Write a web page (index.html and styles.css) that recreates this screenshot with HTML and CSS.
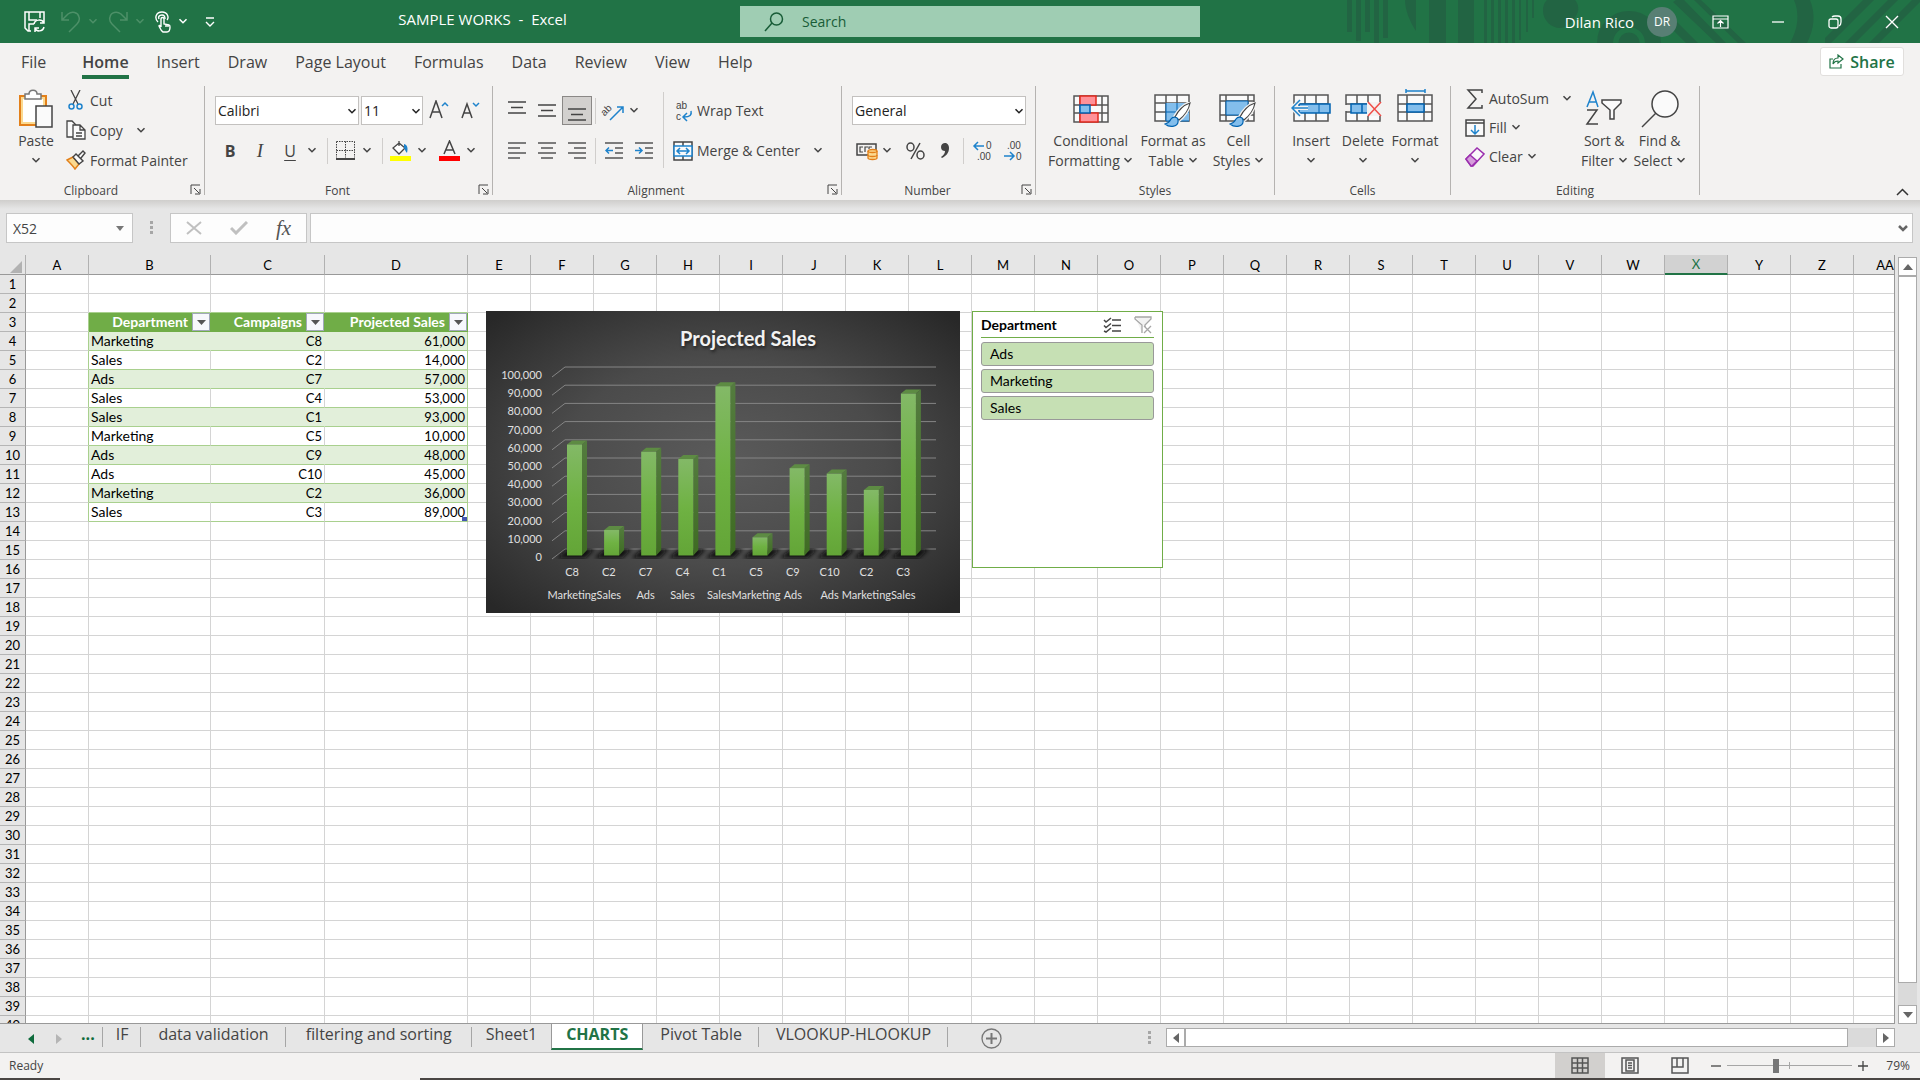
FILE: index.html
```html
<!DOCTYPE html>
<html lang="en">
  <head>
    <meta charset="utf-8">
    <title>SAMPLE WORKS - Excel</title>
    <link rel="stylesheet" href="styles.css">
  </head>
  <body>
    <svg class="sprites" aria-hidden="true">
      <symbol id="chev" viewBox="0 0 8 6"><path d="M1 1l3 3 3-3" fill="none" stroke="currentColor" stroke-width="1.3"/></symbol>
      <symbol id="launch" viewBox="0 0 11 11"><path d="M1 10V1h9M4 4l5 5M10 5v5H5" fill="none" stroke="#444"/></symbol>
      <symbol id="dots" viewBox="0 0 4 14"><path d="M0 0h3v3H0zM0 5h3v3H0zM0 10h3v3H0z" fill="#a6a6a6"/></symbol>
      <symbol id="brush" viewBox="0 0 28 26">
        <path d="M26 1C20 3 14 9 11 15l4 3c5-4 10-11 11-17z" fill="#fff" stroke="#f3f2f1" stroke-width="4"/>
        <path d="M26 1C20 3 14 9 11 15l4 3c5-4 10-11 11-17z" fill="#fff" stroke="#444" stroke-width="1.2"/>
        <path d="M14 18c0-3-5-4-7-1-1 2-2 4-6 5 5 4 14 3 13-4z" fill="#83beec" stroke="#0063b1" stroke-width="1.2"/>
      </symbol>
    </svg>

    <header class="titlebar">
      <svg class="pattern" viewBox="0 0 580 43" aria-hidden="true">
        <g fill="#226443">
          <path d="M7 0h5v32H7zM16 0h5v41h-5zM25 0h5v32h-5zM34 0h5v43h-5zM43 0h5v38h-5z"/>
          <path d="M65 0h11v31C70 22 65 10 65 0zM89 0h17v43H89zM118 0h16v43h-16z"/>
          <path d="M144 0h3v43h-3zM151 0h3v43h-3zM158 0h3v43h-3zM165 0h3v43h-3zM172 0h3v43h-3zM179 0h2v40h-2zM186 0h2v32h-2zM192 0h2v18h-2z"/>
          <path d="M203 11C203 5 205 2 207 0h28c4 5 4 10 2 14-3 7-10 14-17 14-9 0-17-8-17-17z"/>
          <path d="M333 18l25 25h-12l-13-13zM336 0h8l42 43h-10L333 2zM354 0h7l45 43h-8z"/>
          <path d="M454 0h16c6 15 4 29-3 43h-17c8-14 10-29 4-43zM485 38l38-38h11l-43 43h-6zM505 43l43-43h10l-43 43zM529 43l43-43h8v2l-41 41z"/>
        </g>
        <g fill="none" stroke="#226443"><circle cx="289" cy="43" r="24" stroke-width="16"/><circle cx="289" cy="43" r="5" stroke-width="11"/></g>
      </svg>
      <div class="quick">
        <button class="qbtn save" aria-label="Save"><svg width="22" height="22" viewBox="0 0 22 22" fill="none" stroke="#fff" stroke-width="1.5"><path d="M7 20H4l-3-3V1h19v7M5 1v8h8M16 1v6M5 20v-7h5"/><path d="M10 13c1-5 8-5 10-1M20 8v4h-4M20 16c-1 5-8 5-9 1M11 21v-4h4"/></svg></button>
        <button class="qbtn dim" aria-label="Undo"><svg width="20" height="22" viewBox="0 0 20 22" fill="none" stroke="currentColor" stroke-width="1.5"><path d="M1 1v8h7M1 9l6-6c4-3 10-2 11 3 1 3 0 5-2 7l-8 8"/></svg><svg class="chev"><use href="#chev"/></svg></button>
        <button class="qbtn dim" aria-label="Redo"><svg width="20" height="22" viewBox="0 0 20 22" fill="none" stroke="currentColor" stroke-width="1.5"><path d="M19 1v8h-7M19 9l-6-6C9 0 3 1 2 6c-1 3 0 5 2 7l8 8"/></svg><svg class="chev"><use href="#chev"/></svg></button>
        <button class="qbtn" aria-label="Touch mode"><svg width="16" height="22" viewBox="0 0 16 22" fill="none" stroke="#fff" stroke-width="1.4"><path d="M3 11C-1 7 1 1 7 1s7 6 5 8M4 8c-1-2 0-4 3-4s3 2 3 4"/><path d="M6 16V8c0-2 3-2 3 0v5l5 1c1 0 1 1 1 2 0 3-1 5-3 5H8c-2-1-3-4-4-6 0-1 1-1 2 1zM11 13v3M13 14v2"/></svg><svg class="chev"><use href="#chev"/></svg></button>
        <button class="qbtn customize" aria-label="Customize"><svg width="10" height="10" viewBox="0 0 10 10" fill="none" stroke="#fff" stroke-width="1.4"><path d="M1 1h8M1 5l4 4 4-4"/></svg></button>
        <h1 class="doc-title">SAMPLE WORKS&nbsp; -&nbsp; Excel</h1>
      </div>
      <label class="search">
        <svg width="20" height="20" viewBox="0 0 20 20" fill="none" stroke="#185c37" stroke-width="1.5"><circle cx="12.500" cy="7" r="6"/><path d="M8 11l-7 8"/></svg>
        <input type="search" placeholder="Search" aria-label="Search">
      </label>
      <div class="account">
        <span class="user">Dilan Rico</span>
        <span class="avatar">DR</span>
        <button class="win" aria-label="Ribbon display options"><svg width="17" height="14" viewBox="0 0 17 14" fill="none" stroke="#fff" stroke-width="1.2"><path d="M1 1h15v12H1zM1 4h15M8.500 12V6M5.500 8.500l3-3 3 3"/></svg></button>
        <button class="win" aria-label="Minimize"><svg width="14" height="14" viewBox="0 0 14 14" stroke="#fff" stroke-width="1.3"><path d="M1 7h12"/></svg></button>
        <button class="win" aria-label="Restore"><svg width="14" height="14" viewBox="0 0 14 14" fill="none" stroke="#fff" stroke-width="1.3"><rect x="1" y="4" width="9" height="9" rx="2"/><path d="M4 2c1-1 2-1 3-1h3c2 0 3 1 3 3v3c0 2 0 3-2 4"/></svg></button>
        <button class="win" aria-label="Close"><svg width="14" height="14" viewBox="0 0 14 14" stroke="#fff" stroke-width="1.4"><path d="M1 1l12 12M13 1L1 13"/></svg></button>
      </div>
    </header>

    <nav class="tabs">
      <a class="file" href="#file">File</a>
      <a class="active" href="#home">Home</a>
      <a href="#insert">Insert</a>
      <a href="#draw">Draw</a>
      <a href="#layout">Page Layout</a>
      <a href="#formulas">Formulas</a>
      <a href="#data">Data</a>
      <a href="#review">Review</a>
      <a href="#view">View</a>
      <a href="#help">Help</a>
      <button class="share"><svg width="15" height="15" viewBox="0 0 15 15" fill="none" stroke="#217346" stroke-width="1.2"><path d="M4 5H1v9h11v-4"/><path d="M4 10c0-4 2-6 5-6V1l5 4-5 4V7C7 7 5 8 4 10z"/></svg>Share</button>
    </nav>

    <section class="ribbon">
      <div class="group clipboard">
        <div class="body">
          <button class="big paste">
            <span class="art"><svg width="36" height="40" viewBox="0 0 36 40"><path d="M2 7h26v29H2z" fill="#fff" stroke="#e3801a" stroke-width="2"/><path d="M4 9h22v25H4z" fill="none" stroke="#fbd98f" stroke-width="2"/><path d="M7 10V5h4c0-5 8-5 8 0h4v5z" fill="#fff" stroke="#777" stroke-width="1.5"/><path d="M18 17h16v21H18z" fill="#fafafa" stroke="#444" stroke-width="1.5"/></svg></span>
            Paste<svg class="chev"><use href="#chev"/></svg>
          </button>
          <div class="stack">
            <button class="small"><span class="ico"><svg width="16" height="20" viewBox="0 0 16 20" fill="none"><path d="M3 0l7 14M12 0L5 14" stroke="#444" stroke-width="1.3"/><circle cx="3.500" cy="16.500" r="2.500" stroke="#1e83cc" stroke-width="1.500"/><circle cx="11.500" cy="16.500" r="2.500" stroke="#1e83cc" stroke-width="1.500"/></svg></span>Cut</button>
            <button class="small"><span class="ico"><svg width="20" height="20" viewBox="0 0 20 20" fill="#fafafa" stroke="#444" stroke-width="1.3"><path d="M7 17H1V1h5l4 4"/><path d="M7 5h7l5 5v9H7zM14 5v5h5M10 13h6M10 16h6"/></svg></span>Copy<svg class="chev far"><use href="#chev"/></svg></button>
            <button class="small"><span class="ico"><svg width="20" height="20" viewBox="0 0 20 20"><path d="M1 10l6-3 6 7-4 5C7 16 4 13 1 10z" fill="#fbd98f" stroke="#e3801a" stroke-width="1.5"/><path d="M7 7l3-3 7 7-4 3zM12 6l5-5 2 2-4 5" fill="#fafafa" stroke="#444" stroke-width="1.4"/></svg></span>Format Painter</button>
          </div>
        </div>
        <footer class="with-launcher">Clipboard<button aria-label="Clipboard options"><svg width="11" height="11"><use href="#launch"/></svg></button></footer>
      </div>

      <div class="group font">
        <div class="body rows">
          <div class="row">
            <span class="combo name"><select aria-label="Font"><option>Calibri</option></select><svg class="chev"><use href="#chev"/></svg></span>
            <span class="combo size"><select aria-label="Font size"><option>11</option></select><svg class="chev"><use href="#chev"/></svg></span>
            <button class="tool grow" aria-label="Increase font size"><svg width="22" height="22" viewBox="0 0 22 22" fill="none"><path d="M2 18L8 1l6 17M4 12h8" stroke="#444" stroke-width="1.500"/><path d="M14 6l3-3 3 3" stroke="#1e83cc" stroke-width="1.500"/></svg></button>
            <button class="tool grow" aria-label="Decrease font size"><svg width="22" height="22" viewBox="0 0 22 22" fill="none"><path d="M2 18L7 4l5 14M4 13h6" stroke="#444" stroke-width="1.500"/><path d="M13 3l3 3 3-3" stroke="#1e83cc" stroke-width="1.500"/></svg></button>
          </div>
          <div class="row">
            <button class="tool bold" aria-label="Bold">B</button>
            <button class="tool italic" aria-label="Italic">I</button>
            <button class="tool underline" aria-label="Underline">U</button>
            <svg class="chev"><use href="#chev"/></svg>
            <i class="sep"></i>
            <button class="tool" aria-label="Borders"><svg width="19" height="19" viewBox="0 0 19 19" fill="none" stroke="#444"><path d="M.5 .5h18M.5 9.500h18M.5 .5v16M9.500 .5v16M18.500 .5v16" stroke-dasharray="1.500 1"/><path d="M0 18h19" stroke-width="2"/></svg></button>
            <svg class="chev"><use href="#chev"/></svg>
            <i class="sep"></i>
            <button class="tool" aria-label="Fill color"><svg width="21" height="21" viewBox="0 0 21 21"><path d="M9 1v5M9 3l6 5-6 6-6-6z" fill="#fff" stroke="#444" stroke-width="1.300"/><path d="M14 4c4 1 4 5 3 9-2-2-2-4-3-5z" fill="#1e83cc"/><path d="M0 16h21v5H0z" fill="#ff0"/></svg></button>
            <svg class="chev"><use href="#chev"/></svg>
            <button class="tool" aria-label="Font color"><svg width="21" height="21" viewBox="0 0 21 21"><path d="M5 14l5.500-13L16 14M7 10h7" fill="none" stroke="#444" stroke-width="1.500"/><path d="M0 16h21v5H0z" fill="#f00"/></svg></button>
            <svg class="chev"><use href="#chev"/></svg>
          </div>
        </div>
        <footer class="with-launcher">Font<button aria-label="Font options"><svg width="11" height="11"><use href="#launch"/></svg></button></footer>
      </div>

      <div class="group alignment">
        <div class="body">
          <div class="rows">
            <div class="row">
              <button class="tool" aria-label="Top align"><svg width="18" height="20" viewBox="0 0 18 20" stroke="#444" stroke-width="1.500"><path d="M0 1h18M3 6.500h12M0 12h18"/></svg></button>
              <button class="tool" aria-label="Middle align"><svg width="18" height="20" viewBox="0 0 18 20" stroke="#444" stroke-width="1.500"><path d="M0 4h18M3 9.500h12M0 15h18"/></svg></button>
              <button class="tool pressed" aria-label="Bottom align"><svg width="18" height="20" viewBox="0 0 18 20" stroke="#444" stroke-width="1.500"><path d="M0 8h18M3 13.500h12M0 19h18"/></svg></button>
              <i class="sep"></i>
              <button class="tool" aria-label="Orientation"><svg class="loose" width="22" height="22" viewBox="0 0 22 22"><text x="0" y="13" transform="rotate(-45 5 13)" class="glyph">ab</text><path d="M7 20L20 7M14 7h6v6" fill="none" stroke="#1e83cc" stroke-width="1.500"/></svg></button>
              <svg class="chev"><use href="#chev"/></svg>
            </div>
            <div class="row">
              <button class="tool" aria-label="Align left"><svg width="18" height="18" viewBox="0 0 18 18" stroke="#555" stroke-width="1.500"><path d="M0 1h18M0 6h12M0 11h18M0 16h12"/></svg></button>
              <button class="tool" aria-label="Center"><svg width="18" height="18" viewBox="0 0 18 18" stroke="#555" stroke-width="1.500"><path d="M0 1h18M3 6h12M0 11h18M3 16h12"/></svg></button>
              <button class="tool" aria-label="Align right"><svg width="18" height="18" viewBox="0 0 18 18" stroke="#555" stroke-width="1.500"><path d="M0 1h18M6 6h12M0 11h18M6 16h12"/></svg></button>
              <i class="sep"></i>
              <button class="tool" aria-label="Decrease indent"><svg width="18" height="18" viewBox="0 0 18 18" fill="none" stroke="#555" stroke-width="1.500"><path d="M0 1h18M10 6h8M10 11h8M0 16h18"/><path d="M8 8.500H1M4 5.500l-3 3 3 3" stroke="#1e83cc"/></svg></button>
              <button class="tool" aria-label="Increase indent"><svg width="18" height="18" viewBox="0 0 18 18" fill="none" stroke="#555" stroke-width="1.500"><path d="M0 1h18M10 6h8M10 11h8M0 16h18"/><path d="M0 8.500h7M4 5.500l3 3-3 3" stroke="#1e83cc"/></svg></button>
            </div>
          </div>
          <div class="rows wrap">
            <div class="row"><button class="small"><span class="ico"><svg class="loose" width="18" height="22" viewBox="0 0 18 22"><text x="2" y="9" class="glyph">ab</text><text x="2" y="20" class="glyph">c</text><path d="M17 11c1 4-1 6-7 6M13 13l-4 4 4 4" fill="none" stroke="#1e83cc" stroke-width="1.500"/></svg></span>Wrap Text</button></div>
            <div class="row"><button class="small"><span class="ico"><svg width="20" height="20" viewBox="0 0 20 20" fill="#fafafa" stroke="#444" stroke-width="1.500"><path d="M1 1h18v18H1zM10 1v18"/><path d="M1 5h18v10H1z" stroke="#1e83cc"/><path d="M4 10h12M7 7l-3 3 3 3M13 7l3 3-3 3" fill="none" stroke="#1e83cc"/></svg></span>Merge &amp; Center<svg class="chev far"><use href="#chev"/></svg></button></div>
          </div>
        </div>
        <footer class="with-launcher">Alignment<button aria-label="Alignment options"><svg width="11" height="11"><use href="#launch"/></svg></button></footer>
      </div>

      <div class="group number">
        <div class="body rows">
          <div class="row"><span class="combo format"><select aria-label="Number format"><option>General</option></select><svg class="chev"><use href="#chev"/></svg></span></div>
          <div class="row">
            <button class="tool" aria-label="Accounting format"><svg width="22" height="20" viewBox="0 0 22 20" fill="none"><path d="M1 3h19v11H1z" stroke="#444" stroke-width="1.500"/><path d="M7 6H4v5h3M12 6H9v5M16 6h-3v2" stroke="#444" stroke-width="1.200"/><path d="M12 10c0-2 9-2 9 0v7c0 2-9 2-9 0z" fill="#fbd98f" stroke="#e3801a" stroke-width="1.300"/><path d="M12 10c0 2 9 2 9 0M12 14c0 2 9 2 9 0" stroke="#e3801a" stroke-width="1.300"/></svg></button>
            <svg class="chev"><use href="#chev"/></svg>
            <button class="tool percent" aria-label="Percent style"><svg width="19" height="18" viewBox="0 0 19 18" fill="none" stroke="#444" stroke-width="1.500"><ellipse cx="4.500" cy="5" rx="3.500" ry="4"/><ellipse cx="14.500" cy="13" rx="3.500" ry="4"/><path d="M14 1L5 17"/></svg></button>
            <button class="tool" aria-label="Comma style"><svg width="10" height="17" viewBox="0 0 10 17"><path d="M1 5c0-5 8-6 8 1 0 5-3 8-7 10l-1-1c3-2 4-4 4-6-2 0-4-1-4-4z" fill="#444"/></svg></button>
            <i class="sep"></i>
            <button class="tool" aria-label="Increase decimal"><svg class="loose" width="20" height="22" viewBox="0 0 20 22" fill="none"><text x="14" y="9" class="glyph">0</text><text x="5" y="20" class="glyph">.00</text><path d="M12 6H2M6 2L2 6l4 4" stroke="#1e83cc" stroke-width="1.500"/></svg></button>
            <button class="tool" aria-label="Decrease decimal"><svg class="loose" width="20" height="22" viewBox="0 0 20 22" fill="none"><text x="5" y="9" class="glyph">.00</text><text x="14" y="20" class="glyph">0</text><path d="M2 16h10M8 12l4 4-4 4" stroke="#1e83cc" stroke-width="1.500"/></svg></button>
          </div>
        </div>
        <footer class="with-launcher">Number<button aria-label="Number options"><svg width="11" height="11"><use href="#launch"/></svg></button></footer>
      </div>

      <div class="group styles">
        <div class="body">
          <button class="big">
            <span class="art"><svg width="36" height="28" viewBox="0 0 36 28"><path d="M1 1h34v26H1zM1 10h34M1 18h34M7 1v26M29 1v26" fill="#fafafa" stroke="#555" stroke-width="1.500"/><path d="M7 1h16v9H7zM7 18h18v9H7z" fill="#ff9198" stroke="#e22a1e" stroke-width="1.500"/><path d="M7 10h10v8H7z" fill="#83beec" stroke="#0063b1" stroke-width="1.500"/></svg></span>
            Conditional<span>Formatting <svg class="chev"><use href="#chev"/></svg></span>
          </button>
          <button class="big">
            <span class="art"><svg width="40" height="36" viewBox="0 0 40 36"><path d="M2 4h34v26H2zM2 12h34M2 21h34M13 4v26M24 4v26" fill="#fafafa" stroke="#555" stroke-width="1.500"/><path d="M13 12h23v18H13z" fill="#83beec"/><path d="M13 21h23M24 12v18M13 12v18h23" stroke="#0063b1" fill="none"/><use href="#brush" x="11" y="11" width="28" height="26"/></svg></span>
            Format as<span>Table <svg class="chev"><use href="#chev"/></svg></span>
          </button>
          <button class="big">
            <span class="art"><svg width="40" height="36" viewBox="0 0 40 36"><path d="M2 4h34v26H2zM2 10h34M2 24h34M8 4v26M30 4v26" fill="#fafafa" stroke="#555" stroke-width="1.500"/><path d="M8 10h22v14H8z" fill="#83beec" stroke="#0063b1"/><use href="#brush" x="11" y="11" width="28" height="26"/></svg></span>
            Cell<span>Styles <svg class="chev"><use href="#chev"/></svg></span>
          </button>
        </div>
        <footer>Styles</footer>
      </div>

      <div class="group cells">
        <div class="body">
          <button class="big">
            <span class="art"><svg width="40" height="36" viewBox="0 0 40 36"><path d="M3 4h34v26H3zM3 13h34M3 21h34M14 4v26M25 4v26" fill="#fafafa" stroke="#555" stroke-width="1.500"/><path d="M8 13h31v9H8z" fill="#83beec" stroke="#0063b1" stroke-width="1.500"/><path d="M28 13v9" stroke="#0063b1"/><path d="M17 17H1M9 9l-8 8 8 8" fill="none" stroke="#f3f2f1" stroke-width="4"/><path d="M17 17H1M9 9l-8 8 8 8" fill="none" stroke="#1e83cc" stroke-width="1.500"/></svg></span>
            Insert<svg class="chev"><use href="#chev"/></svg>
          </button>
          <button class="big">
            <span class="art"><svg width="40" height="36" viewBox="0 0 40 36"><path d="M3 4h34v26H3zM3 13h34M3 21h34M14 4v26M25 4v26" fill="#fafafa" stroke="#555" stroke-width="1.500"/><path d="M2 14h5v6H2z" fill="#f3f2f1"/><path d="M8 13h16l4 4-4 5H8zM19 13v9" fill="#83beec" stroke="#0063b1" stroke-width="1.500"/><path d="M24 11h15v14H24z" fill="#f3f2f1"/><path d="M25 11l13 14M38 11L25 25" stroke="#f04e48" stroke-width="1.500"/></svg></span>
            Delete<svg class="chev"><use href="#chev"/></svg>
          </button>
          <button class="big">
            <span class="art"><svg class="loose" width="40" height="36" viewBox="0 0 40 36"><path d="M3 4h34v26H3zM3 13h34M3 21h34M12 4v26M29 4v26" fill="#fafafa" stroke="#555" stroke-width="1.500"/><path d="M12 13h17v8H12z" fill="#83beec" stroke="#0063b1" stroke-width="1.500"/><path d="M11 0h19M11 -2v4M30 -2v4" stroke="#1e83cc" stroke-width="1.500"/></svg></span>
            Format<svg class="chev"><use href="#chev"/></svg>
          </button>
        </div>
        <footer>Cells</footer>
      </div>

      <div class="group editing">
        <div class="body">
          <div class="stack">
            <button class="small"><span class="ico"><svg width="20" height="20" viewBox="0 0 20 20" fill="none" stroke="#444" stroke-width="1.500"><path d="M17 4V1H3l8 9-8 9h14v-3"/></svg></span>AutoSum<svg class="chev far"><use href="#chev"/></svg></button>
            <button class="small"><span class="ico"><svg width="20" height="18" viewBox="0 0 20 18" fill="#fafafa" stroke="#444" stroke-width="1.500"><path d="M1 1h18v16H1zM1 4h18"/><path d="M10 6v9M6 11l4 4 4-4" fill="none" stroke="#1e83cc"/></svg></span>Fill<svg class="chev"><use href="#chev"/></svg></button>
            <button class="small"><span class="ico"><svg width="20" height="20" viewBox="0 0 20 20" stroke="#9b2fae" stroke-width="1.500"><path d="M1 12L12 1l7 6L8 19H6z" fill="#fafafa"/><path d="M1 12l4-4 7 6-5 5H6z" fill="#d59ddb"/></svg></span>Clear<svg class="chev"><use href="#chev"/></svg></button>
          </div>
          <button class="big">
            <span class="art"><svg width="38" height="38" viewBox="0 0 38 38" fill="none" stroke-width="1.500"><path d="M2 17L8 2l5 15M4 12h7" stroke="#1e83cc"/><path d="M2 20h10L2 34h11" stroke="#444"/><path d="M17 10h19v3l-7 7v9h-4v-9l-8-7z" fill="#fafafa" stroke="#444"/></svg></span>
            Sort &amp;<span>Filter <svg class="chev"><use href="#chev"/></svg></span>
          </button>
          <button class="big">
            <span class="art"><svg width="38" height="38" viewBox="0 0 38 38" fill="#fafafa" stroke="#444" stroke-width="1.500"><circle cx="24" cy="14" r="13"/><path d="M15 23L1 37"/></svg></span>
            Find &amp;<span>Select <svg class="chev"><use href="#chev"/></svg></span>
          </button>
        </div>
        <footer>Editing</footer>
      </div>
      <button class="collapse" aria-label="Collapse the ribbon"><svg width="13" height="8" viewBox="0 0 13 8" fill="none" stroke="#333" stroke-width="1.500"><path d="M1 7l5.500-5.500L12 7"/></svg></button>
    </section>

    <section class="formula-bar">
      <label class="name-box"><input type="text" value="X52" aria-label="Name box"><svg width="8" height="5" viewBox="0 0 8 5"><path d="M0 0h8L4 5z" fill="#777"/></svg></label>
      <svg class="grip" width="4" height="14"><use href="#dots"/></svg>
      <div class="formula-tools">
        <button aria-label="Cancel"><svg width="16" height="14" viewBox="0 0 16 14" stroke="#c0c0c0" stroke-width="2"><path d="M1 1l14 12M15 1L1 13"/></svg></button>
        <button aria-label="Enter"><svg width="18" height="14" viewBox="0 0 18 14" fill="none" stroke="#c0c0c0" stroke-width="3"><path d="M1 7l5 5L17 1"/></svg></button>
        <button class="fx" aria-label="Insert function">fx</button>
      </div>
      <label class="formula"><input type="text" aria-label="Formula"><svg width="10" height="7" viewBox="0 0 10 7" fill="none" stroke="#666" stroke-width="2.500"><path d="M1 1l4 4 4-4"/></svg></label>
    </section>

    <main class="workspace">
      <div class="sheet">
        <table class="grid" id="grid"></table>
        <svg class="chart" id="chart" viewBox="0 0 474 302" role="img" aria-label="Projected Sales">
          <defs>
            <radialGradient id="panel" cx="50%" cy="50%" r="68%"><stop offset="0" stop-color="#5b5b5b"/><stop offset=".5" stop-color="#4b4b4b"/><stop offset="1" stop-color="#282828"/></radialGradient>
            <linearGradient id="front" x2="0" y2="1"><stop offset="0" stop-color="#83b967"/><stop offset=".5" stop-color="#6fb243"/><stop offset="1" stop-color="#63a537"/></linearGradient>
            <linearGradient id="side" x2="0" y2="1"><stop offset="0" stop-color="#547c3f"/><stop offset="1" stop-color="#3e6b22"/></linearGradient>
            <filter id="soft"><feGaussianBlur stdDeviation="2"/></filter>
          </defs>
          <rect width="474" height="302" fill="url(#panel)"/>
          <text class="chart-title" x="262" y="35">Projected Sales</text>
        </svg>
        <aside class="slicer">
          <header>
            <h2>Department</h2>
            <button aria-label="Multi-select"><svg width="18" height="16" viewBox="0 0 18 16" fill="none" stroke="#444" stroke-width="1.500"><path d="M9 3h9M9 8.500h9M9 14h9"/><path d="M1 3l2 2 5-4M1 8.500l2 2 5-4M1 14l2 1 5-4"/></svg></button>
            <button aria-label="Clear filter"><svg width="18" height="18" viewBox="0 0 18 18" fill="#f2f2f2" stroke="#a6a6a6" stroke-width="1.300"><path d="M1 1h16v2l-6 6v2M8 17V9L1 3V1"/><path d="M10 10l7 7M17 10l-7 7"/></svg></button>
          </header>
          <button class="item">Ads</button>
          <button class="item">Marketing</button>
          <button class="item">Sales</button>
        </aside>
      </div>
      <div class="vscroll">
        <button aria-label="Scroll up"><svg width="10" height="6" viewBox="0 0 10 6"><path d="M0 6h10L5 0z" fill="#666"/></svg></button>
        <div class="track"><div class="thumb"></div></div>
        <button aria-label="Scroll down"><svg width="10" height="6" viewBox="0 0 10 6"><path d="M0 0h10L5 6z" fill="#666"/></svg></button>
      </div>
    </main>

    <nav class="sheets">
      <button class="nav" aria-label="Previous sheets"><svg width="6" height="10" viewBox="0 0 6 10"><path d="M6 0v10L0 5z" fill="#0f6b3c"/></svg></button>
      <button class="nav" aria-label="Next sheets"><svg width="6" height="10" viewBox="0 0 6 10"><path d="M0 0v10l6-5z" fill="#b5b5b5"/></svg></button>
      <a class="more" href="#more">...</a>
      <a class="narrow" href="#if">IF</a>
      <a href="#validation">data validation</a>
      <a class="wide" href="#filtering">filtering and sorting</a>
      <a class="last" href="#sheet1">Sheet1</a>
      <a class="active" href="#charts">CHARTS</a>
      <a href="#pivot">Pivot Table</a>
      <a href="#lookup">VLOOKUP-HLOOKUP</a>
      <button class="add" aria-label="New sheet"><svg width="21" height="21" viewBox="0 0 21 21" fill="none" stroke="#777" stroke-width="1.300"><circle cx="10.500" cy="10.500" r="9.500"/><path d="M5 10.500h11M10.500 5v11" stroke-width="2"/></svg></button>
      <svg class="grip" width="4" height="14"><use href="#dots"/></svg>
      <div class="hscroll">
        <button aria-label="Scroll left"><svg width="6" height="10" viewBox="0 0 6 10"><path d="M6 0v10L0 5z" fill="#666"/></svg></button>
        <div class="track"><div class="thumb"></div></div>
        <button aria-label="Scroll right"><svg width="6" height="10" viewBox="0 0 6 10"><path d="M0 0v10l6-5z" fill="#666"/></svg></button>
      </div>
    </nav>

    <footer class="status">
      <span class="ready">Ready</span>
      <button class="view on" aria-label="Normal"><svg width="18" height="17" viewBox="0 0 18 17" fill="none" stroke="#555" stroke-width="1.500"><path d="M1 1h16v15H1zM1 6h16M1 11h16M6.500 1v15M11.500 1v15"/></svg></button>
      <button class="view" aria-label="Page layout"><svg width="18" height="17" viewBox="0 0 18 17" fill="none" stroke="#555" stroke-width="1.500"><path d="M1 1h16v15H1zM5 3h8v11H5zM7 6h4M7 8.500h4M7 11h4"/></svg></button>
      <button class="view" aria-label="Page break preview"><svg width="18" height="17" viewBox="0 0 18 17" fill="none" stroke="#555" stroke-width="1.500"><path d="M1 1h16v15H1zM1 10h11V1M6 1v9"/></svg></button>
      <button class="zoom" aria-label="Zoom out"><svg width="10" height="10" viewBox="0 0 10 10" stroke="#444" stroke-width="1.300"><path d="M0 5h10"/></svg></button>
      <input class="slider" type="range" min="10" max="190" value="79" aria-label="Zoom">
      <button class="zoom" aria-label="Zoom in"><svg width="10" height="10" viewBox="0 0 10 10" stroke="#444" stroke-width="1.300"><path d="M0 5h10M5 0v10"/></svg></button>
      <span class="percent-label">79%</span>
    </footer>
    <div class="taskbar"><span></span></div>

    <script src="sheet.js"></script>
  </body>
</html>
```
FILE: styles.css
```css
* {
  box-sizing: border-box;
}

body {
  margin: 0;
  height: 100vh;
  display: flex;
  flex-direction: column;
  overflow: hidden;
  background: #e6e6e6;
  color: #444;
  font-family: "Open Sans", "Noto Sans", sans-serif;
  font-size: 14px;
}

button {
  display: flex;
  align-items: center;
  justify-content: center;
  padding: 0;
  border: 0;
  background: none;
  color: inherit;
  font: inherit;
}

a {
  color: inherit;
  text-decoration: none;
}

svg {
  flex: none;
}

input {
  min-width: 0;
  border: 0;
  outline: 0;
  background: none;
  font: inherit;
}

.sprites {
  position: absolute;
  width: 0;
  height: 0;
}

.chev {
  width: 10px;
  height: 7px;
}

.loose {
  overflow: visible;
}

.glyph {
  fill: #444;
  font-family: "Liberation Sans", sans-serif;
  font-size: 10px;
}

/* title bar */

.titlebar {
  position: relative;
  display: grid;
  grid-template-columns: 740fr 460fr 720fr;
  align-items: center;
  height: 43px;
  background: #217346;
  color: #fff;
}

.pattern {
  position: absolute;
  top: 0;
  right: 0;
  width: 580px;
  height: 43px;
}

.quick {
  display: flex;
  align-items: center;
  gap: 10px;
  padding-left: 24px;
}

.qbtn {
  gap: 7px;
}

.qbtn.dim {
  color: #4d9068;
}

.save {
  margin-right: 5px;
}

.customize {
  margin-left: 7px;
}

.doc-title {
  flex: 1;
  margin: 0;
  text-align: center;
  font-size: 15px;
  font-weight: 400;
  line-height: 38px;
  height: 43px;
}

.search {
  display: flex;
  align-items: center;
  gap: 16px;
  height: 31px;
  padding-left: 24px;
  background: #9fcdb3;
}

.search input {
  flex: 1;
  color: #185c37;
}

.search input::placeholder {
  color: #185c37;
  opacity: 1;
}

.account {
  position: relative;
  display: flex;
  align-items: center;
  justify-content: flex-end;
}

.user {
  font-size: 15px;
}

.avatar {
  width: 30px;
  margin: 0 15px 0 13px;
  border-radius: 50%;
  background: #587f74;
  text-align: center;
  font-size: 12px;
  line-height: 30px;
}

.win {
  width: 57px;
  height: 43px;
}

/* ribbon */

.tabs {
  display: flex;
  align-items: flex-start;
  gap: 28px;
  height: 43px;
  padding-left: 21px;
  background: #f3f2f1;
  font-size: 16px;
}

.tabs a {
  height: 36px;
  line-height: 38px;
}

.tabs .file {
  margin-right: 8px;
}

.tabs .active {
  border-bottom: 4px solid #217346;
  font-weight: 600;
}

.share {
  gap: 6px;
  width: 84px;
  height: 29px;
  margin: 4px 16px 0 auto;
  border: 1px solid #e1dfdd;
  border-radius: 3px;
  background: #fff;
  color: #217346;
  font-weight: 600;
}

.ribbon {
  display: flex;
  height: 114px;
  background: #f3f2f1;
}

.group {
  display: flex;
  flex-direction: column;
  flex: none;
  height: 109px;
  border-right: 1px solid #b5b3b1;
}

.group .body {
  display: flex;
  flex: none;
  height: 94px;
}

.group footer {
  position: relative;
  text-align: center;
  font-size: 12px;
  line-height: 22px;
}

.group .with-launcher {
  padding-right: 22px;
}

.group footer button {
  position: absolute;
  right: 3px;
  top: 4px;
}

.clipboard {
  width: 205px;
}

.font {
  width: 288px;
}

.alignment {
  width: 349px;
}

.number {
  width: 194px;
}

.styles {
  width: 239px;
}

.cells {
  width: 176px;
}

.editing {
  width: 249px;
}

.big {
  flex-direction: column;
  justify-content: flex-start;
  line-height: 20px;
}

.big .art {
  display: flex;
  align-items: center;
  justify-content: center;
  height: 45px;
}

.big > .chev {
  margin-top: 6px;
}

.big span .chev {
  vertical-align: 2px;
}

.paste {
  width: 66px;
  padding-left: 6px;
}

.stack {
  display: flex;
  flex-direction: column;
}

.small {
  justify-content: flex-start;
  height: 30px;
}

.small .ico {
  display: flex;
  justify-content: center;
  width: 20px;
  margin-right: 4px;
}

.small .chev {
  margin-left: 4px;
}

.small .chev.far {
  margin-left: 13px;
}

.rows {
  flex-direction: column;
  padding: 9px 0 0 10px;
}

.rows .row {
  display: flex;
  align-items: center;
  height: 31px;
}

.rows .row + .row {
  margin-top: 9px;
}

.sep {
  width: 1px;
  height: 26px;
  background: #d0cecc;
}

.combo {
  position: relative;
  display: flex;
  flex: none;
}

.combo select {
  width: 100%;
  height: 29px;
  padding: 0 2px;
  border: 1px solid #c3c1bf;
  border-radius: 0;
  background: #fff;
  color: #222;
  font: inherit;
  appearance: none;
}

.combo .chev {
  position: absolute;
  right: 2px;
  top: 12px;
  color: #222;
}

.combo.name {
  width: 144px;
  margin-right: 2px;
}

.combo.size {
  width: 62px;
}

.combo.format {
  width: 174px;
}

.tool {
  flex: none;
  width: 30px;
  height: 29px;
}

.tool.grow {
  width: 32px;
}

.font .tool {
  font-size: 16px;
}

.font .row > .chev {
  margin-left: 2px;
}

.font .chev + .tool {
  margin-left: 7px;
}

.font .sep {
  margin: 0 2px 0 10px;
}

.font .bold {
  font-weight: 700;
}

.font .italic {
  font-family: "Liberation Serif", serif;
  font-style: italic;
  font-size: 19px;
}

.font .underline {
  text-decoration: underline;
  text-underline-offset: 3px;
}

.tool.pressed {
  border: 1px solid #8a8886;
  background: #d2d0ce;
}

.alignment .sep {
  margin: 0 3px;
}

.alignment .body > .rows:first-child {
  width: 170px;
  padding-left: 9px;
}

.alignment .wrap {
  height: 76px;
  margin-top: 6px;
  padding: 3px 0 0 9px;
  border-left: 1px solid #d0cecc;
}

.number .sep {
  margin: 0 3px;
}

.number .percent {
  width: 30px;
  margin-left: 8px;
}

.styles .body {
  gap: 7px;
  padding-left: 12px;
}

.cells .body {
  padding-left: 10px;
}

.cells .big {
  width: 52px;
}

.editing .body {
  gap: 6px;
  padding-left: 14px;
}

.editing .stack {
  width: 110px;
}

.small {
  margin-top: -1px;
}

.small + .small,
.row .small {
  margin-top: 0;
}

.editing .small {
  height: 29px;
}

.editing .small:first-child {
  margin-top: -2px;
}

.collapse {
  width: 17px;
  height: 13px;
  margin: 99px 9px 0 auto;
}

/* formula bar */

.formula-bar {
  display: flex;
  align-items: flex-start;
  height: 55px;
  padding: 13px 7px 0 6px;
  background: linear-gradient(#cfcecc, #e6e6e6 9px);
}

.name-box,
.formula-tools,
.formula {
  display: flex;
  align-items: center;
  height: 30px;
  border: 1px solid #c6c6c6;
  background: #fdfdfd;
}

.name-box {
  width: 127px;
  padding: 0 8px 0 4px;
}

.name-box input {
  flex: 1;
  color: #444;
}

.formula-bar .grip {
  margin: 8px 16px 0 17px;
}

.formula-tools {
  width: 137px;
  margin-right: 3px;
}

.formula-tools button {
  width: 45px;
}

.fx {
  color: #555;
  font-family: "Liberation Serif", serif;
  font-style: italic;
  font-size: 21px;
}

.formula {
  flex: 1;
  padding-right: 4px;
}

.formula input {
  flex: 1;
}

/* worksheet */

.workspace {
  flex: 1;
  min-height: 0;
  display: flex;
}

.sheet {
  position: relative;
  flex: 1;
  overflow: hidden;
  border-right: 1px solid #999;
  border-bottom: 1px solid #999;
  color: #000;
  font-family: Lato, sans-serif;
  font-size: 14px;
}

.grid {
  table-layout: fixed;
  width: 0;
  border-spacing: 0;
  background: #fff;
}

.grid th,
.grid td {
  height: 19px;
  padding: 0 2px;
  border-right: 1px solid #d4d4d4;
  border-bottom: 1px solid #d4d4d4;
  overflow: hidden;
  white-space: nowrap;
  line-height: 18px;
}

.grid th {
  font-size: 13px;
  font-weight: 400;
}

.grid thead th {
  height: 20px;
  border-right-color: #b1b1b1;
  border-bottom-color: #999;
  background: #e6e6e6;
}

.grid thead th.selected {
  background: #d2d2d2;
  border-bottom: 2px solid #217346;
  color: #217346;
}

.grid tbody th {
  border-right-color: #999;
  border-bottom-color: #b5b5b5;
  background: #e6e6e6;
}

.grid thead .corner {
  padding: 0;
  text-align: right;
}

.corner svg {
  display: block;
  margin: 4px 3px 0 auto;
}

.grid td.green-right {
  border-right-color: #a9d08e;
}

.grid td.green-bottom {
  border-bottom-color: #a9d08e;
}

.grid td.head {
  padding: 0;
  border-color: #70ad47;
  background: #70ad47;
  color: #fff;
  font-weight: 700;
}

.head div {
  display: flex;
  justify-content: flex-end;
  gap: 4px;
}

.head button {
  width: 18px;
  height: 18px;
  border: 1px solid #a0a8b8;
  background: #f7f8fc;
}

.grid td.band {
  background: #e2efda;
}

.grid td.band.inner {
  border-right-color: #e2efda;
}

.grid td.num {
  font-size: 13px;
  text-align: right;
}

.grid td.corner-mark {
  background: linear-gradient(#4558b0, #4558b0) right bottom / 5px 4px no-repeat;
}

.chart {
  position: absolute;
  left: 486px;
  top: 56px;
  width: 474px;
  height: 302px;
}

.chart text {
  fill: #e0e0e0;
  font-size: 11px;
  text-anchor: middle;
}

.chart .value {
  text-anchor: end;
}

.chart .chart-title {
  fill: #f2f2f2;
  font-size: 20px;
  font-weight: 700;
  text-shadow: 1px 2px 3px #222;
}

.wall {
  fill: none;
  stroke: #858585;
}

.slicer {
  position: absolute;
  left: 972px;
  top: 56px;
  width: 191px;
  height: 257px;
  padding: 0 8px;
  border: 1px solid #70ad47;
  background: #fff;
}

.slicer header {
  display: flex;
  align-items: center;
  gap: 13px;
  height: 26px;
  margin-bottom: 4px;
  padding-right: 2px;
  border-bottom: 1px solid #70ad47;
}

.slicer h2 {
  flex: 1;
  margin: 0;
  font-size: 14px;
}

.slicer .item {
  justify-content: flex-start;
  width: 100%;
  height: 24px;
  margin-bottom: 3px;
  padding: 0 8px 1px;
  border: 1px solid #999;
  border-radius: 3px;
  background: #c6e0b4;
}

.vscroll {
  display: flex;
  flex-direction: column;
  width: 25px;
  padding: 2px 3px 0;
}

.vscroll button,
.hscroll button {
  flex: none;
  width: 19px;
  height: 19px;
  border: 1px solid #ababab;
  background: #fff;
}

.track {
  flex: 1;
  background: #dadada;
}

.thumb {
  border: 1px solid #ababab;
  background: #fff;
}

.vscroll .thumb {
  height: 97%;
}

.hscroll .thumb {
  width: 96%;
  height: 19px;
}

.hscroll {
  display: flex;
  width: 729px;
  margin: 4px 25px 0 14px;
}

/* sheet tabs */

.sheets {
  display: flex;
  align-items: flex-start;
  height: 29px;
  border-bottom: 1px solid #c3c3c3;
  font-size: 16px;
}

.sheets a {
  height: 26px;
  padding: 0 17px;
  line-height: 20px;
  background: linear-gradient(#a6a6a6, #a6a6a6) right 3px / 1px 20px no-repeat;
}

.sheets .nav {
  width: 28px;
  height: 29px;
}

.sheets .nav:first-child {
  margin-left: 17px;
}

.sheets .more {
  padding: 0 8px;
  color: #0f6b3c;
  font-weight: 700;
}

.sheets .narrow {
  padding: 0 13px;
}

.sheets .wide {
  padding: 0 20px;
}

.sheets .last {
  padding: 0 14px;
  background: none;
}

.sheets .active {
  padding: 0 14px;
  border: 1px solid #999;
  border-top: 0;
  border-bottom: 2px solid #217346;
  background: #fff;
  color: #217346;
  font-weight: 700;
}

.sheets .add {
  margin: 4px auto 0 33px;
}

.sheets .grip {
  margin-top: 7px;
}

/* status bar */

.status {
  display: flex;
  align-items: center;
  height: 25px;
  padding: 0 10px 0 9px;
  background: #f3f2f1;
  font-size: 12px;
}

.ready {
  flex: 1;
}

.view {
  width: 50px;
  height: 25px;
}

.view.on {
  background: #d2d0ce;
}

.zoom {
  width: 22px;
  height: 25px;
}

.slider {
  width: 125px;
  height: 16px;
  margin: 0;
  appearance: none;
  background:
    linear-gradient(#a6a6a6, #a6a6a6) center / 1px 7px no-repeat,
    linear-gradient(#a6a6a6, #a6a6a6) center / 100% 1px no-repeat;
}

.slider::-webkit-slider-thumb {
  appearance: none;
  width: 6px;
  height: 14px;
  background: #777;
}

.percent-label {
  width: 36px;
  text-align: right;
}

.taskbar {
  height: 2px;
  padding-left: 60px;
  background: #4a4644;
}

.taskbar span {
  display: block;
  width: 360px;
  height: 2px;
  background: #f3f2f1;
}
```
FILE: sheet.js
```js
const ROWS = 40;
const SVG = 'http://www.w3.org/2000/svg';
const columns = [...'ABCDEFGHIJKLMNOPQRSTUVWXYZ', 'AA'];
const widths = {B: 122, C: 114, D: 143};
const titles = ['Department', 'Campaigns', 'Projected Sales'];
const data = [
  ['Marketing', 'C8', 61000],
  ['Sales', 'C2', 14000],
  ['Ads', 'C7', 57000],
  ['Sales', 'C4', 53000],
  ['Sales', 'C1', 93000],
  ['Marketing', 'C5', 10000],
  ['Ads', 'C9', 48000],
  ['Ads', 'C10', 45000],
  ['Marketing', 'C2', 36000],
  ['Sales', 'C3', 89000]
];

function cell(row, col) {
  const c = col - 1;
  const inside = c >= 0 && c < 3;
  const classes = [];
  let text = '';
  if (row == 2 && inside) classes.push('green-bottom');
  if (row >= 3 && row <= 13) {
    if (col == 0 || col == 3) classes.push('green-right');
    if (inside) classes.push('green-bottom');
  }
  if (row == 3 && inside) {
    classes.push('head');
    text = `<div>${titles[c]}<button aria-label="Filter ${titles[c]}"><svg width="9" height="5"><path d="M0 0h9L4.5 5z" fill="#555"/></svg></button></div>`;
  } else if (row > 3 && row <= 13 && inside) {
    text = data[row - 4][c].toLocaleString('en-US');
    if (row % 2 == 0) classes.push('band');
    if (c < 2) classes.push('inner');
    if (c > 0) classes.push('num');
    if (row == 13 && c == 2) classes.push('corner-mark');
  }
  return `<td class="${classes.join(' ')}">${text}</td>`;
}

function drawGrid() {
  let html = '<colgroup><col style="width:26px">';
  html += columns.map(name => `<col style="width:${widths[name] || 63}px">`).join('');
  html += '</colgroup><thead><tr><th class="corner"><svg width="12" height="12"><path d="M12 0v12H0z" fill="#b2b2b2"/></svg></th>';
  html += columns.map(name => `<th class="${name == 'X' ? 'selected' : ''}">${name}</th>`).join('');
  html += '</tr></thead><tbody>';
  for (let row = 1; row <= ROWS; row++) {
    html += `<tr><th>${row}</th>${columns.map((name, col) => cell(row, col)).join('')}</tr>`;
  }
  document.getElementById('grid').innerHTML = html + '</tbody>';
}

const chart = document.getElementById('chart');

function add(tag, attributes, text) {
  const node = document.createElementNS(SVG, tag);
  for (const key in attributes) node.setAttribute(key, attributes[key]);
  if (text) node.textContent = text;
  chart.appendChild(node);
}

function drawChart() {
  for (let i = 0; i <= 10; i++) {
    const y = 238 - i * 18.2;
    add('path', {d: `M66 ${y + 10}L79 ${y}H450`, class: 'wall'});
    add('text', {x: 56, y: y + 12, class: 'value'}, (i * 10000).toLocaleString('en-US'));
  }
  data.forEach(([department, campaign, sales], i) => {
    const x = 81 + i * 37.1;
    const top = 244.5 - sales * 0.00182;
    add('path', {d: `M${x - 10} 247l12 -9h26l-10 9z`, fill: '#111', filter: 'url(#soft)'});
    add('path', {d: `M${x} ${top}l5 -4h15l-5 4z`, fill: '#5d8b43'});
    add('path', {d: `M${x + 15} ${top}l5 -4V239l-5 5.5z`, fill: 'url(#side)'});
    add('rect', {x: x, y: top, width: 15, height: 244.5 - top, fill: 'url(#front)'});
    add('text', {x: 86 + i * 36.8, y: 265}, campaign);
    add('text', {x: 86 + i * 36.8, y: 288}, department);
  });
}

drawGrid();
drawChart();
```
